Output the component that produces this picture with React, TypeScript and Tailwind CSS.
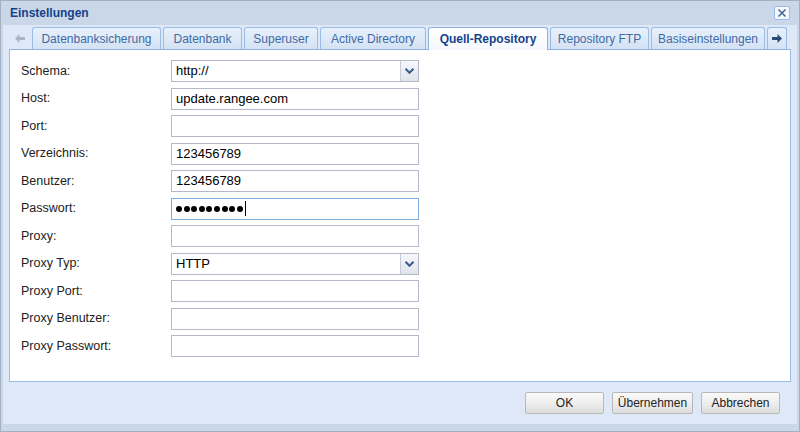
import React from 'react';

const tabs = [
  { label: 'Datenbanksicherung', w: 'w-[129px]' },
  { label: 'Datenbank', w: 'w-[79px]' },
  { label: 'Superuser', w: 'w-[74px]' },
  { label: 'Active Directory', w: 'w-[106px]' },
  { label: 'Quell-Repository', w: 'w-[120px]', active: true },
  { label: 'Repository FTP', w: 'w-[99px]' },
  { label: 'Basiseinstellungen', w: 'w-[114px]' },
];

type Field = { label: string; value?: string; combo?: boolean; password?: boolean };

const fields: Field[] = [
  { label: 'Schema:', value: 'http://', combo: true },
  { label: 'Host:', value: 'update.rangee.com' },
  { label: 'Port:' },
  { label: 'Verzeichnis:', value: '123456789' },
  { label: 'Benutzer:', value: '123456789' },
  { label: 'Passwort:', password: true },
  { label: 'Proxy:' },
  { label: 'Proxy Typ:', value: 'HTTP', combo: true },
  { label: 'Proxy Port:' },
  { label: 'Proxy Benutzer:' },
  { label: 'Proxy Passwort:' },
];

function ChevronDown() {
  return (
    <svg width="9" height="6" viewBox="0 0 9 6">
      <path d="M0.5 0.8 L4.5 4.8 L8.5 0.8" fill="none" stroke="#3b5b8c" strokeWidth="2" />
    </svg>
  );
}

function FormRow({ field }: { field: Field }) {
  return (
    <div className="flex items-center h-[22px]">
      <div className="w-[150px] text-[12.5px] text-[#222]">{field.label}</div>
      <div
        className={`relative w-[248px] h-[22px] bg-white border flex items-center pl-[4px] text-[13px] text-black ${
          field.password ? 'border-[#7eadd9]' : 'border-[#b5b8c8]'
        }`}
      >
        {field.value && <span>{field.value}</span>}
        {field.password && (
          <div className="flex items-center gap-[1.6px]">
            {Array.from({ length: 9 }).map((_, i) => (
              <span key={i} className="inline-block w-[6px] h-[6px] rounded-full bg-black" />
            ))}
            <span className="inline-block w-[1px] h-[15px] bg-black ml-[1px]" />
          </div>
        )}
        {field.combo && (
          <div className="absolute right-0 top-0 h-full w-[18px] border-l border-[#c5cad6] bg-gradient-to-b from-[#f6f8fb] to-[#dfe4ec] flex items-center justify-center">
            <ChevronDown />
          </div>
        )}
      </div>
    </div>
  );
}

function FooterButton({ label, w }: { label: string; w: string }) {
  return (
    <button
      className={`${w} h-[22px] rounded-[2px] border border-[#b8b8b8] bg-gradient-to-b from-[#fafafa] via-[#eeeeee] to-[#dcdcdc] text-[12px] text-[#222] font-['Liberation_Sans',Arial,sans-serif]`}
    >
      {label}
    </button>
  );
}

export default function App() {
  return (
    <div className="w-[800px] h-[432px] bg-[#cad7e8] border border-[#a3b0c2] flex flex-col font-['Liberation_Sans',Arial,sans-serif]">
      {/* title */}
      <div className="h-[24px] flex items-center justify-between pl-[9px] pr-[9px]">
        <span className="text-[12px] font-bold text-[#15428b]">Einstellungen</span>
        <div className="w-[16px] h-[14px] bg-[#f4f7fb] border border-[#99bbe8] rounded-[2px] flex items-center justify-center">
          <svg width="10" height="10" viewBox="0 0 10 10">
            <path d="M1.5 1.5 L8.5 8.5 M8.5 1.5 L1.5 8.5" stroke="#4a6a96" strokeWidth="1.6" />
          </svg>
        </div>
      </div>

      <div className="flex-1 mx-[2px] mb-[7px] bg-[#dfe8f6] px-[6px] flex flex-col">
        {/* tab strip */}
        <div className="h-[25px] flex items-end border-b border-[#8db2e3]">
          <div className="w-[22px] h-[22px] flex items-center justify-center">
            <svg width="10" height="9" viewBox="0 0 10 9">
              <path d="M0 4.5 L4.5 0 L4.5 3 L10 3 L10 6 L4.5 6 L4.5 9 Z" fill="#aab4c2" />
            </svg>
          </div>
          <div className="flex items-end gap-[2px] ml-[1px]">
            {tabs.map((t) =>
              t.active ? (
                <div
                  key={t.label}
                  className={`${t.w} h-[23px] -mb-[1px] rounded-t-[3px] border border-b-0 border-[#8db2e3] bg-gradient-to-b from-[#ffffff] to-[#f5f9fe] flex items-center justify-center text-[12px] font-bold text-[#15428b]`}
                >
                  {t.label}
                </div>
              ) : (
                <div
                  key={t.label}
                  className={`${t.w} h-[22px] rounded-t-[3px] border border-b-0 border-[#99bbe8] bg-gradient-to-b from-[#e8f1fc] to-[#d4e2f4] flex items-center justify-center text-[12px] text-[#416aa3]`}
                >
                  {t.label}
                </div>
              )
            )}
          </div>
          <div className="ml-[2px] w-[20px] h-[22px] rounded-t-[3px] border border-b-0 border-[#99bbe8] bg-gradient-to-b from-[#e8f1fc] to-[#d4e2f4] flex items-center justify-center">
            <svg width="10" height="9" viewBox="0 0 10 9">
              <path d="M10 4.5 L5.5 0 L5.5 3 L0 3 L0 6 L5.5 6 L5.5 9 Z" fill="#2b4a78" />
            </svg>
          </div>
        </div>

        {/* body */}
        <div className="h-[332px] bg-white border border-t-0 border-[#99bbe8] pl-[11px] pt-[10px] flex flex-col gap-[5.5px]">
          {fields.map((f) => (
            <FormRow key={f.label} field={f} />
          ))}
        </div>

        {/* footer */}
        <div className="flex-1 flex justify-end items-start pt-[10px] pr-[11px] gap-[8px]">
          <FooterButton label="OK" w="w-[79px]" />
          <FooterButton label="Übernehmen" w="w-[81px]" />
          <FooterButton label="Abbrechen" w="w-[79px]" />
        </div>
      </div>
    </div>
  );
}
